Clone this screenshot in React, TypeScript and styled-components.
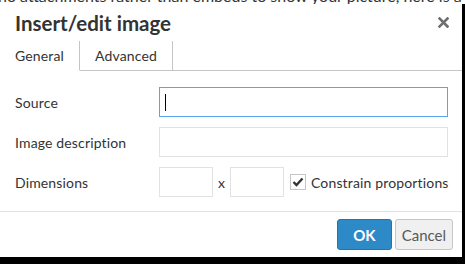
import React from "react";
import styled, { createGlobalStyle } from "styled-components";

const FONT = `Lato, "Open Sans", sans-serif`;

const Global = createGlobalStyle`
  html, body { margin: 0; padding: 0; background: #000; }
  body { width: 465px; height: 264px; overflow: hidden; font-family: ${FONT}; }
  * { box-sizing: border-box; }
`;

const Page = styled.div`
  width: 465px;
  height: 264px;
  display: flex;
  flex-direction: column;
  background: #000;
`;

const Backdrop = styled.div`
  height: 4px;
  background: #fff;
  overflow: hidden;
  white-space: nowrap;
`;

const BackdropText = styled.div`
  margin-top: -12px;
  margin-left: -2px;
  font-family: ${FONT};
  font-size: 16px;
  line-height: 16px;
  color: #333;
`;

const Dialog = styled.div`
  width: 462px;
  height: 253px;
  background: #fff;
  display: flex;
  flex-direction: column;
`;

const Header = styled.div`
  height: 37px;
  display: flex;
  align-items: center;
  justify-content: space-between;
  padding: 0 13px 0 15px;
`;

const Title = styled.h1`
  margin: 0;
  font-family: ${FONT};
  font-weight: 700;
  font-size: 20.5px;
  color: #333;
`;

const Close = styled.button`
  border: 0;
  background: none;
  padding: 0;
  width: 12px;
  height: 12px;
  display: flex;
  align-items: center;
  justify-content: center;
  cursor: pointer;
`;

const Tabs = styled.div`
  height: 30px;
  display: flex;
  border-bottom: 1px solid #c5c5c5;
`;

const Tab = styled.div<{ $active?: boolean }>`
  height: 30px;
  padding: 0 15px;
  display: flex;
  align-items: center;
  font-family: ${FONT};
  font-size: 14px;
  letter-spacing: 0.15px;
  color: #333;
  border-right: 1px solid #c5c5c5;
  background: #fff;
  border-bottom: 1px solid ${(p) => (p.$active ? "#fff" : "#c5c5c5")};
  margin-bottom: -1px;
`;

const Form = styled.div`
  flex: 1;
  display: flex;
  flex-direction: column;
  gap: 10px;
  padding: 16px 14px 0 15px;
`;

const Row = styled.div`
  display: flex;
  align-items: center;
  height: 30px;
  white-space: nowrap;
`;

const Label = styled.label`
  width: 144px;
  flex-shrink: 0;
  font-family: ${FONT};
  font-size: 14px;
  letter-spacing: 0.15px;
  color: #333;
`;

const Input = styled.input<{ $w?: number }>`
  flex-shrink: 0;
  height: 30px;
  width: ${(p) => (p.$w ? `${p.$w}px` : "289px")};
  border: 1px solid #e2e2e2;
  outline: none;
  padding: 0 4px;
  font-family: ${FONT};
  font-size: 14px;
  background: #fff;
`;

const Caret = styled.span`
  display: inline-block;
  width: 1px;
  height: 17px;
  background: #000;
`;

const FakeInput = styled.div`
  flex-shrink: 0;
  height: 30px;
  width: 289px;
  border: 1px solid #59a5e5;
  display: flex;
  align-items: center;
  padding-left: 5px;
`;

const Times = styled.span`
  width: 17px;
  flex-shrink: 0;
  text-align: center;
  font-family: ${FONT};
  font-size: 14px;
  color: #333;
`;

const Check = styled.span`
  flex-shrink: 0;
  width: 16px;
  height: 16px;
  margin-left: 6px;
  border: 1px solid #c5c5c5;
  display: flex;
  align-items: center;
  justify-content: center;
`;

const CheckLabel = styled.span`
  margin-left: 5px;
  font-family: ${FONT};
  font-size: 14px;
  letter-spacing: 0.15px;
  color: #333;
`;

const Footer = styled.div`
  height: 46px;
  border-top: 1px solid #e2e2e2;
  display: flex;
  align-items: center;
  justify-content: flex-end;
  gap: 3px;
  padding: 0 9px 0 0;
`;

const Button = styled.button<{ $primary?: boolean }>`
  height: 31px;
  padding: 0 ${(p) => (p.$primary ? "15px" : "6px")};
  min-width: ${(p) => (p.$primary ? "52px" : "56px")};
  border-radius: 3px;
  border: 1px solid ${(p) => (p.$primary ? "#2276a8" : "#c5c5c5")};
  background: ${(p) => (p.$primary ? "#2d8ac7" : "#f0f0f0")};
  color: ${(p) => (p.$primary ? "#fff" : "#595959")};
  font-family: ${FONT};
  font-size: 15px;
  font-weight: ${(p) => (p.$primary ? 700 : 400)};
  cursor: pointer;
`;

export default function App() {
  return (
    <Page>
      <Global />
      <Backdrop>
        <BackdropText>
          no attachments rather than embeds to show your picture, here is a
        </BackdropText>
      </Backdrop>
      <Dialog>
        <Header>
          <Title>Insert/edit image</Title>
          <Close aria-label="Close">
            <svg width="11" height="11" viewBox="0 0 11 11">
              <path d="M1.5 1.5 L9.5 9.5 M9.5 1.5 L1.5 9.5" stroke="#6e6e6e" strokeWidth="2.6" strokeLinecap="square" />
            </svg>
          </Close>
        </Header>
        <Tabs>
          <Tab $active>General</Tab>
          <Tab>Advanced</Tab>
        </Tabs>
        <Form>
          <Row>
            <Label>Source</Label>
            <FakeInput>
              <Caret />
            </FakeInput>
          </Row>
          <Row>
            <Label>Image description</Label>
            <Input />
          </Row>
          <Row>
            <Label>Dimensions</Label>
            <Input $w={54} />
            <Times>x</Times>
            <Input $w={54} />
            <Check>
              <svg width="12" height="10" viewBox="0 0 12 10">
                <path d="M1.5 5 L4.5 8 L10.5 1.5" fill="none" stroke="#333" strokeWidth="2.4" />
              </svg>
            </Check>
            <CheckLabel>Constrain proportions</CheckLabel>
          </Row>
        </Form>
        <Footer>
          <Button $primary>OK</Button>
          <Button>Cancel</Button>
        </Footer>
      </Dialog>
    </Page>
  );
}
